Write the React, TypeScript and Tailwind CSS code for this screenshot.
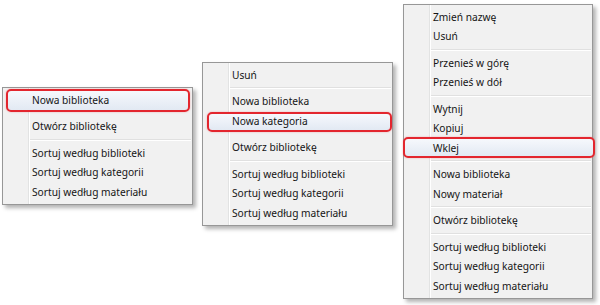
import React from "react";

type Item =
  | { kind: "item"; label: string; hot?: boolean }
  | { kind: "sep"; hidden?: boolean };

interface MenuProps {
  items: Item[];
  className: string;
  // where the red annotation box sits around the hot row
  hotBox: string;
}

const it = (label: string, hot = false): Item => ({ kind: "item", label, hot });
const sep = (hidden = false): Item => ({ kind: "sep", hidden });

const ContextMenu: React.FC<MenuProps> = ({ items, className, hotBox }) => {
  return (
    <div
      className={`relative shrink-0 border border-[#979797] py-[2px] shadow-[3px_3px_4px_rgba(0,0,0,0.3)] bg-[linear-gradient(to_right,#f1f1f1_25px,#e2e3e3_25px,#e2e3e3_26px,#ffffff_26px,#ffffff_27px,#f1f1f1_27px)] ${className}`}
    >
      {items.map((item, i) =>
        item.kind === "sep" ? (
          <div key={i} className="h-[7px] flex flex-col justify-center pl-[27px] pr-[1px]">
            {!item.hidden && (
              <div className="h-[2px] border-t border-[#e0e0e0] border-b border-b-white" />
            )}
          </div>
        ) : (
          <div key={i} className="relative h-[19.5px] flex items-center pl-[29px]">
            {item.hot && (
              <div
                className={`absolute rounded-[5px] border-2 border-[#e3262e] bg-gradient-to-b from-[#f6f8fc] to-[#e2e9f3] shadow-[0_0_2px_rgba(227,38,46,0.35)] ${hotBox}`}
              />
            )}
            <span className="relative text-[10.2px] text-[#151515] leading-none">{item.label}</span>
          </div>
        )
      )}
    </div>
  );
};

export default function App() {
  const menu1: Item[] = [
    it("Nowa biblioteka", true),
    sep(true),
    it("Otwórz bibliotekę"),
    sep(),
    it("Sortuj według biblioteki"),
    it("Sortuj według kategorii"),
    it("Sortuj według materiału"),
  ];

  const menu2: Item[] = [
    it("Usuń"),
    sep(),
    it("Nowa biblioteka"),
    it("Nowa kategoria", true),
    sep(true),
    it("Otwórz bibliotekę"),
    sep(),
    it("Sortuj według biblioteki"),
    it("Sortuj według kategorii"),
    it("Sortuj według materiału"),
  ];

  const menu3: Item[] = [
    it("Zmień nazwę"),
    it("Usuń"),
    sep(),
    it("Przenieś w górę"),
    it("Przenieś w dół"),
    sep(),
    it("Wytnij"),
    it("Kopiuj"),
    it("Wklej", true),
    sep(),
    it("Nowa biblioteka"),
    it("Nowy materiał"),
    sep(),
    it("Otwórz bibliotekę"),
    sep(),
    it("Sortuj według biblioteki"),
    it("Sortuj według kategorii"),
    it("Sortuj według materiału"),
  ];

  return (
    <div
      className="w-[600px] h-[305px] bg-white flex items-start overflow-hidden"
      style={{ fontFamily: '"Noto Sans", "Open Sans", sans-serif' }}
    >
      <ContextMenu
        items={menu1}
        className="ml-[2px] mt-[87px] w-[191px]"
        hotBox="left-[3px] right-[2px] top-[-1.5px] bottom-[-2px]"
      />
      <ContextMenu
        items={menu2}
        className="ml-[9px] mt-[62px] w-[191px]"
        hotBox="left-[4px] right-[0px] top-[1px] bottom-[-1px]"
      />
      <ContextMenu
        items={menu3}
        className="ml-[10px] mt-[4px] w-[190px]"
        hotBox="left-[-1px] right-[-3px] top-[-1.5px] bottom-[0px]"
      />
    </div>
  );
}
